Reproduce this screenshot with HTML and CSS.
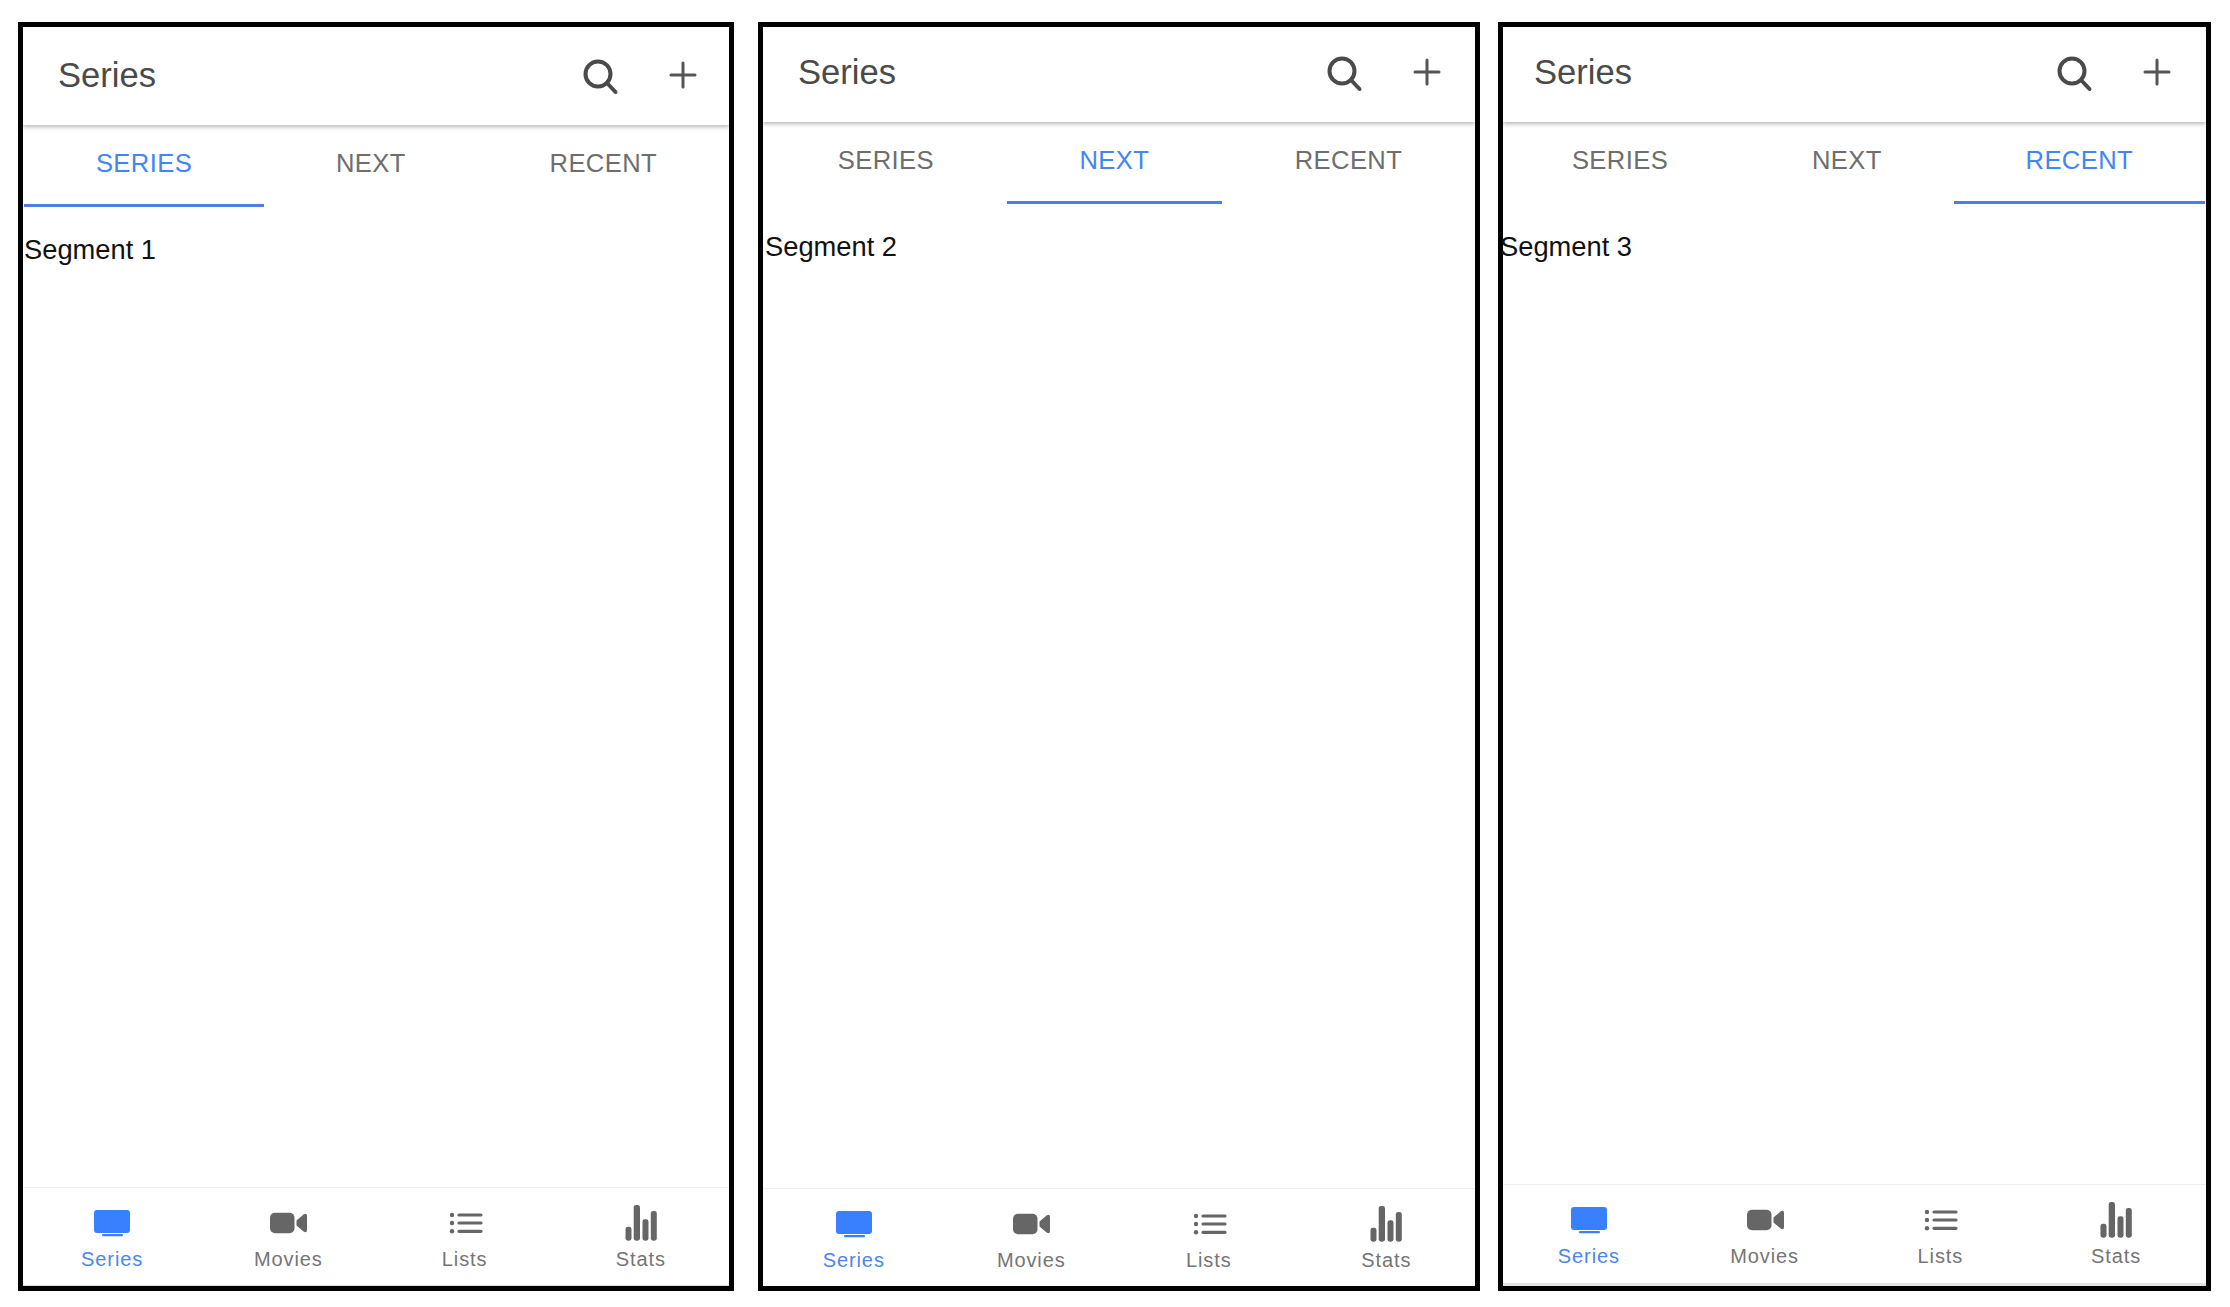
FILE: index.html
```html
<!DOCTYPE html>
<html lang="en">
<head>
    <meta charset="UTF-8">
    <title>Series screens</title>
    <link rel="stylesheet" href="styles.css">
</head>
<body>
    <!-- shared icons -->
    <svg class="icon-defs" aria-hidden="true">
        <symbol id="icon-search" viewBox="0 0 38 38">
            <circle cx="17" cy="17" r="12.5" fill="none" stroke="currentColor" stroke-width="4"/>
            <path d="M26 26 L34.5 35" fill="none" stroke="currentColor" stroke-width="4" stroke-linecap="round"/>
        </symbol>
        <symbol id="icon-plus" viewBox="0 0 28 28">
            <path d="M14 2 V26 M2 14 H26" fill="none" stroke="currentColor" stroke-width="3" stroke-linecap="round"/>
        </symbol>
        <symbol id="icon-tv" viewBox="0 0 44 44">
            <rect x="4" y="9" width="36" height="23" rx="3"/>
            <rect x="12" y="33" width="21" height="2.2" rx="1"/>
        </symbol>
        <symbol id="icon-video" viewBox="0 0 44 44">
            <rect x="4" y="11.7" width="24.5" height="20.6" rx="5"/>
            <path d="M30.5 19.5 L37.6 13.4 Q41 11.6 41 15 V29 Q41 32.4 37.6 30.6 L30.5 24.5 Z"/>
        </symbol>
        <symbol id="icon-list" viewBox="0 0 44 44">
            <path d="M16 14 H38 M16 22 H38 M16 30.3 H38" fill="none" stroke="currentColor" stroke-width="3.2" stroke-linecap="round"/>
            <circle cx="9" cy="14" r="2.2"/>
            <circle cx="9" cy="22" r="2.2"/>
            <circle cx="9" cy="30.3" r="2.2"/>
        </symbol>
        <symbol id="icon-stats" viewBox="0 0 44 44">
            <rect x="6.5" y="25.7" width="6" height="14" rx="2.4"/>
            <rect x="14.7" y="4" width="6.3" height="35.7" rx="2.4"/>
            <rect x="23.5" y="18.3" width="6" height="21.4" rx="2.4"/>
            <rect x="31.8" y="10" width="6" height="29.7" rx="2.4"/>
        </symbol>
    </svg>

    <div class="panel panel-1">
        <div class="screen">
            <header class="app-header">
                <span class="app-title">Series</span>
                <svg class="search-icon"><use href="#icon-search"/></svg>
                <svg class="plus-icon"><use href="#icon-plus"/></svg>
            </header>
            <nav class="segments">
                <div class="segment active">SERIES</div>
                <div class="segment">NEXT</div>
                <div class="segment">RECENT</div>
            </nav>
            <main class="content">Segment 1</main>
            <footer class="tab-bar">
                <div class="tab active"><svg><use href="#icon-tv"/></svg><span>Series</span></div>
                <div class="tab"><svg><use href="#icon-video"/></svg><span>Movies</span></div>
                <div class="tab"><svg><use href="#icon-list"/></svg><span>Lists</span></div>
                <div class="tab"><svg><use href="#icon-stats"/></svg><span>Stats</span></div>
            </footer>
        </div>
    </div>

    <div class="panel panel-2">
        <div class="screen">
            <header class="app-header">
                <span class="app-title">Series</span>
                <svg class="search-icon"><use href="#icon-search"/></svg>
                <svg class="plus-icon"><use href="#icon-plus"/></svg>
            </header>
            <nav class="segments">
                <div class="segment">SERIES</div>
                <div class="segment active">NEXT</div>
                <div class="segment">RECENT</div>
            </nav>
            <main class="content">Segment 2</main>
            <footer class="tab-bar">
                <div class="tab active"><svg><use href="#icon-tv"/></svg><span>Series</span></div>
                <div class="tab"><svg><use href="#icon-video"/></svg><span>Movies</span></div>
                <div class="tab"><svg><use href="#icon-list"/></svg><span>Lists</span></div>
                <div class="tab"><svg><use href="#icon-stats"/></svg><span>Stats</span></div>
            </footer>
        </div>
    </div>

    <div class="panel panel-3">
        <div class="screen">
            <header class="app-header">
                <span class="app-title">Series</span>
                <svg class="search-icon"><use href="#icon-search"/></svg>
                <svg class="plus-icon"><use href="#icon-plus"/></svg>
            </header>
            <nav class="segments">
                <div class="segment">SERIES</div>
                <div class="segment">NEXT</div>
                <div class="segment active">RECENT</div>
            </nav>
            <main class="content">Segment 3</main>
            <footer class="tab-bar">
                <div class="tab active"><svg><use href="#icon-tv"/></svg><span>Series</span></div>
                <div class="tab"><svg><use href="#icon-video"/></svg><span>Movies</span></div>
                <div class="tab"><svg><use href="#icon-list"/></svg><span>Lists</span></div>
                <div class="tab"><svg><use href="#icon-stats"/></svg><span>Stats</span></div>
            </footer>
        </div>
    </div>
</body>
</html>
```

FILE: styles.css
```css
* {
    box-sizing: border-box;
}

body {
    margin: 0;
    padding: 22px 0 0 18px;
    display: flex;
    align-items: flex-start;
    background-color: white;
    font-family: "Liberation Sans", Arial, sans-serif;
}

.icon-defs {
    width: 0;
    height: 0;
    position: absolute;
}

.panel {
    height: 1269px;
    border: 5px solid black;
    background-color: white;
}

.panel-1 {
    width: 716px;
}

.panel-2 {
    width: 722px;
    margin-left: 24px;
}

.panel-3 {
    width: 713px;
    margin-left: 18px;
}

.screen {
    height: 100%;
    display: flex;
    flex-direction: column;
}

.panel-3 .screen {
    border-bottom: 3px solid #e4e4e4;
}

/* header */
.app-header {
    height: 98px;
    padding: 0 32px 2px 35px;
    display: flex;
    align-items: center;
    color: #4a4a4a;
    box-shadow: 0 2px 4px rgba(0,0,0,0.28);
}

.panel-2 .app-header,
.panel-3 .app-header {
    height: 95px;
    padding-bottom: 5px;
}

.panel-2 .app-header {
    padding-right: 34px;
}

.panel-3 .app-header {
    padding-left: 31px;
    padding-right: 35px;
}

.app-title {
    flex: 1;
    font-size: 34.6px;
}

.search-icon {
    width: 38px;
    height: 38px;
    margin-top: 2px;
}

.plus-icon {
    width: 28px;
    height: 28px;
    margin-left: 50px;
    color: #555;
}

/* segments */
.segments {
    height: 82px;
    display: flex;
}

.panel-1 .segments {
    padding-left: 1px;
}

.panel-2 .segments {
    padding-left: 2px;
}

/* the third capture sits a little to the left, its text runs onto the frame */
.panel-3 .segments {
    margin: 0 1px 0 -3px;
}

.segment {
    flex: 1 1 auto;
    padding-top: 24px;
    text-align: center;
    font-size: 25.6px;
    letter-spacing: 0.4px;
    color: #6e6e6e;
}

.segment.active {
    color: #4285f4;
    border-bottom: 3px solid #4a7fe8;
}

.content {
    flex: 1;
    margin-top: 28px;
    padding-left: 1px;
    font-size: 27.3px;
    line-height: 30px;
    color: #111;
}

.panel-2 .content {
    padding-left: 2px;
}

.panel-3 .content {
    margin-left: -3px;
    padding-left: 0;
}

/* bottom tabs */
.tab-bar {
    height: 99px;
    padding-top: 13px;
    display: flex;
    border-top: 1px solid #eee;
}

.panel-1 .tab-bar {
    padding-left: 1px;
    border-bottom: 1px solid #ddd;
}

.panel-2 .tab-bar {
    height: 98px;
    padding-left: 2px;
}

.tab {
    flex: 1;
    display: flex;
    flex-direction: column;
    align-items: center;
    color: #666;
}

.panel-3 .tab {
    transform: translateX(-2px);
}

.tab svg {
    width: 44px;
    height: 44px;
    fill: currentColor;
}

.tab span {
    margin-top: 2px;
    font-size: 20px;
    line-height: 24px;
    letter-spacing: 0.9px;
    color: #757575;
}

.tab.active {
    color: #3880ff;
}

.tab.active span {
    color: #4a86f0;
}
```
